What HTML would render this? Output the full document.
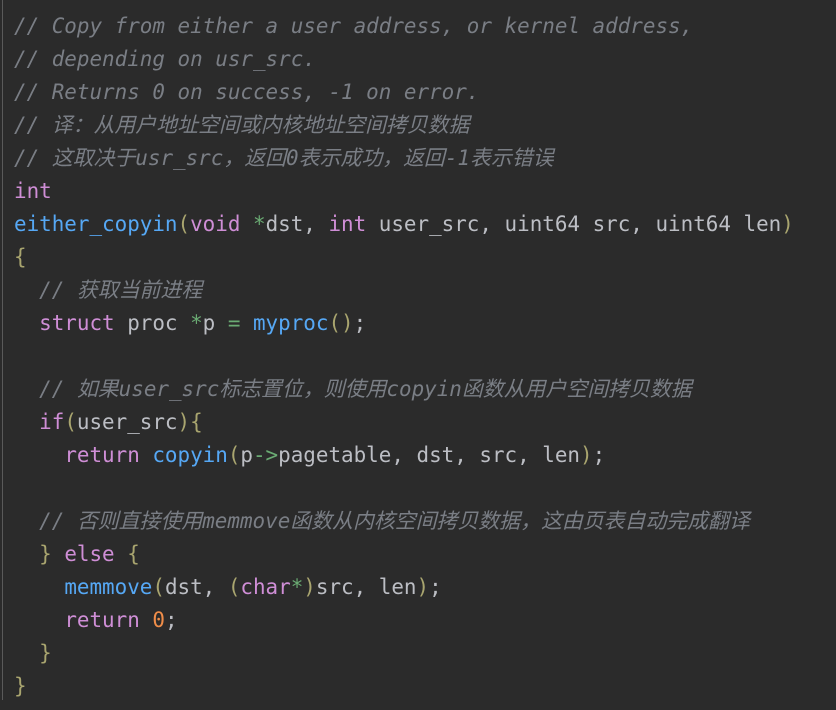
<!DOCTYPE html>
<html><head><meta charset="utf-8"><style>
body{margin:0;width:836px;height:710px;background:#2b2b2b;overflow:hidden}
.bar{position:absolute;left:2px;top:0;width:1px;height:700px;background:#5a5a5a}
pre{position:absolute;left:14px;top:10px;margin:0;font:20.9px/33px "DejaVu Sans Mono","Noto Sans CJK SC",monospace;color:#bcbec4;white-space:pre}
.c{color:#7a7e85;font-style:italic}
.k{color:#cf8ed6}
.f{color:#56a8f5}
.p{color:#a9a56f}
.o{color:#6aab73}
.n{color:#f08d49}
</style></head><body><div class="bar"></div><pre><span class="c">// Copy from either a user address, or kernel address,
// depending on usr_src.
// Returns 0 on success, -1 on error.
// 译：从用户地址空间或内核地址空间拷贝数据
// 这取决于usr_src，返回0表示成功，返回-1表示错误</span>
<span class="k">int</span>
<span class="f">either_copyin</span><span class="p">(</span><span class="k">void</span> <span class="o">*</span>dst, <span class="k">int</span> user_src, uint64 src, uint64 len<span class="p">)</span>
<span class="p">{</span>
  <span class="c">// 获取当前进程</span>
  <span class="k">struct</span> proc <span class="o">*</span>p <span class="o">=</span> <span class="f">myproc</span><span class="p">()</span>;

  <span class="c">// 如果user_src标志置位，则使用copyin函数从用户空间拷贝数据</span>
  <span class="k">if</span><span class="p">(</span>user_src<span class="p">){</span>
    <span class="k">return</span> <span class="f">copyin</span><span class="p">(</span>p<span class="o">-&gt;</span>pagetable, dst, src, len<span class="p">)</span>;

  <span class="c">// 否则直接使用memmove函数从内核空间拷贝数据，这由页表自动完成翻译</span>
  <span class="p">}</span> <span class="k">else</span> <span class="p">{</span>
    <span class="f">memmove</span><span class="p">(</span>dst, <span class="p">(</span><span class="k">char</span><span class="o">*</span><span class="p">)</span>src, len<span class="p">)</span>;
    <span class="k">return</span> <span class="n">0</span>;
  <span class="p">}</span>
<span class="p">}</span></pre></body></html>
